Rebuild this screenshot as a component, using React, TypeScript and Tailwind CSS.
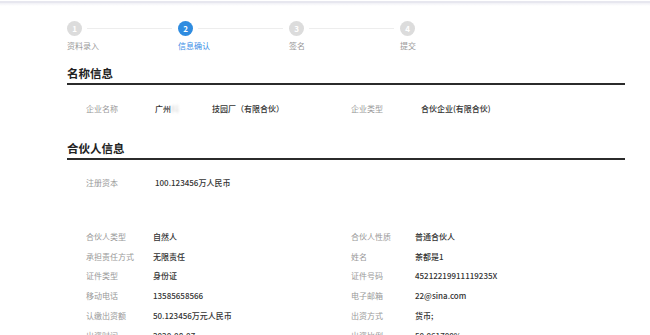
import React from 'react';

const steps = [
  { n: 1, label: '资料录入', active: false },
  { n: 2, label: '信息确认', active: true },
  { n: 3, label: '签名', active: false },
  { n: 4, label: '提交', active: false },
];

const partnerRows: [string, string, string, string][] = [
  ['合伙人类型', '自然人', '合伙人性质', '普通合伙人'],
  ['承担责任方式', '无限责任', '姓名', '茶都是1'],
  ['证件类型', '身份证', '证件号码', '45212219911119235X'],
  ['移动电话', '13585658566', '电子邮箱', '22@sina.com'],
  ['认缴出资额', '50.123456万元人民币', '出资方式', '货币;'],
  ['出资时间', '2020-08-07', '出资比例', '50.061700%'],
];

const SectionTitle: React.FC<{ title: string }> = ({ title }) => (
  <div>
    <h2 className="text-[11.5px] leading-[14px] font-bold text-[#222]">{title}</h2>
    <div className="mt-[3px] h-[2px] bg-[#2b2b2b]" />
  </div>
);

const App: React.FC = () => {
  return (
    <div className="w-[650px] h-[335px] overflow-hidden bg-white font-['Noto_Sans_CJK_SC','Noto_Sans',sans-serif]">
      {/* top shadow */}
      <div className="h-px" />
      <div className="h-[2px] bg-[#e7e7ef]" />
      <div className="h-[3px] bg-gradient-to-b from-[#f1f1f6] to-white" />

      {/* stepper */}
      <div className="mt-[15px] pl-[67px] flex">
        {steps.map((s, i) => (
          <div key={s.n} className={`flex flex-col ${i < steps.length - 1 ? 'w-[111px]' : ''}`}>
            <div className="flex items-center">
              <div
                className={`w-[15px] h-[15px] rounded-full flex items-center justify-center text-[8px] font-bold text-white ${
                  s.active ? 'bg-[#2f8ce0]' : 'bg-[#dcdcdc]'
                }`}
              >
                {s.n}
              </div>
              {i < steps.length - 1 && <div className="flex-1 h-px bg-[#ededed] ml-[5px] mr-[6px]" />}
            </div>
            <div className={`mt-[5px] text-[8px] leading-[10px] ${s.active ? 'text-[#3a8ee6]' : 'text-[#999]'}`}>
              {s.label}
            </div>
          </div>
        ))}
      </div>

      <div className="pl-[67px] pr-[25px]">
        <div className="mt-[15px]">
          <SectionTitle title="名称信息" />
        </div>

        <div className="mt-[19px] pl-[19px] flex text-[8px] leading-[10px]">
          <div className="w-[265px] flex">
            <span className="w-[69px] text-[#999]">企业名称</span>
            <span className="text-[#333] font-medium">
              广州
              <span className="inline-block w-[41px] text-[#ddd] blur-[1px]">科</span>
              技园厂（有限合伙）
            </span>
          </div>
          <div className="flex">
            <span className="w-[70px] text-[#999]">企业类型</span>
            <span className="text-[#333] font-medium">合伙企业(有限合伙)</span>
          </div>
        </div>

        <div className="mt-[27px]">
          <SectionTitle title="合伙人信息" />
        </div>

        <div className="mt-[18px] pl-[19px] flex text-[8px] leading-[10px]">
          <span className="w-[69px] text-[#999]">注册资本</span>
          <span className="text-[#333] font-medium">100.123456万人民币</span>
        </div>

        <div className="mt-[39px] pl-[19px] flex flex-col text-[8px] leading-[10px]">
          {partnerRows.map(([l1, v1, l2, v2]) => (
            <div key={l1} className="h-[19.8px] flex items-center">
              <div className="w-[265px] flex">
                <span className="w-[67px] text-[#999]">{l1}</span>
                <span className="text-[#333] font-medium">{v1}</span>
              </div>
              <div className="flex">
                <span className="w-[64px] text-[#999]">{l2}</span>
                <span className="text-[#333] font-medium">{v2}</span>
              </div>
            </div>
          ))}
        </div>
      </div>
    </div>
  );
};

export default App;
